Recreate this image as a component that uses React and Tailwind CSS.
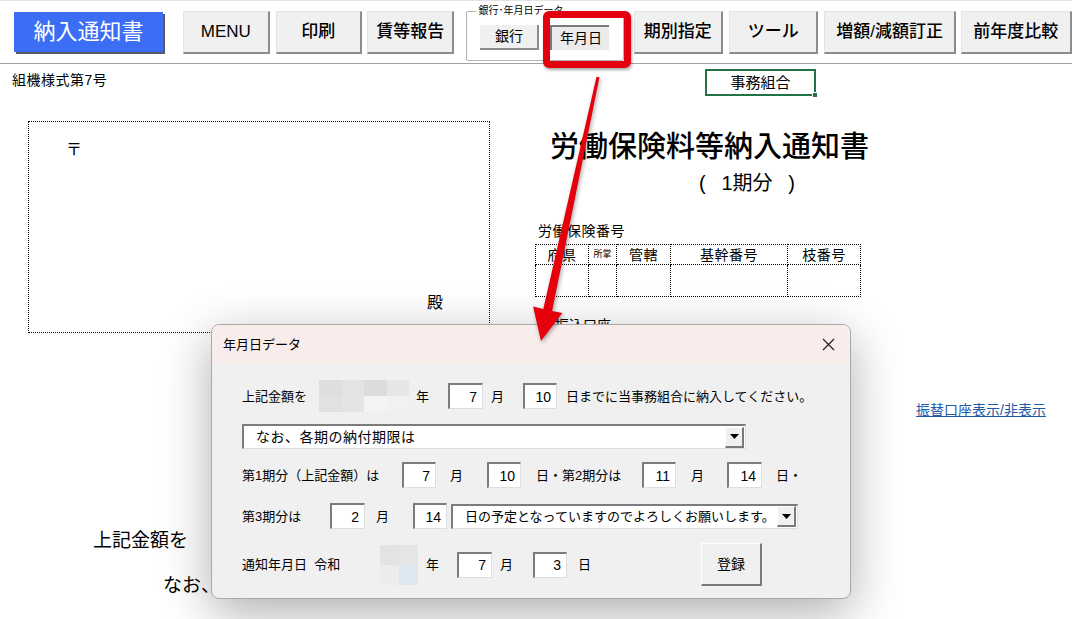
import React from "react";

const ToolButton = ({ label, className }) => (
  <div
    className={`h-[43px] flex items-center justify-center bg-[#f0f0f0] border-t border-l border-t-[#e4e4e4] border-l-[#e4e4e4] border-r-2 border-b-2 border-r-[#8c8c8c] border-b-[#8c8c8c] text-[17px] font-medium text-black ${className}`}
  >
    {label}
  </div>
);

const Field = ({ value, className }) => (
  <div
    className={`h-[26px] bg-white border-t-2 border-l-2 border-t-[#7c7c7c] border-l-[#7c7c7c] border-r border-b border-r-[#dedede] border-b-[#dedede] flex items-center justify-end pr-[5px] text-[14px] leading-none ${className}`}
  >
    {value}
  </div>
);

const DropButton = () => (
  <div className="shrink-0 w-[19px] h-[21px] bg-[#f0f0f0] border-t border-l border-white border-r-2 border-b-2 border-r-[#7a7a7a] border-b-[#7a7a7a] flex items-center justify-center">
    <svg width="9" height="5" viewBox="0 0 9 5">
      <path d="M0 0h9L4.5 5z" fill="#000" />
    </svg>
  </div>
);

const Combo = ({ text, className }) => (
  <div
    className={`h-[25px] bg-white border-t-2 border-l-2 border-t-[#7c7c7c] border-l-[#7c7c7c] border-r border-b border-r-[#dedede] border-b-[#dedede] flex items-center justify-between pl-[12px] pr-[1px] leading-none whitespace-nowrap ${className}`}
  >
    <span>{text}</span>
    <DropButton />
  </div>
);

const Dialog = () => (
  <div className="absolute left-[211px] top-[324px] w-[640px] h-[275px] rounded-[8px] border border-[#a9a9a9] bg-[#f0f0f0] shadow-[0_14px_50px_rgba(0,0,0,0.32)] overflow-hidden text-black">
    <div className="h-[38px] bg-[#f9edec] flex items-center justify-between pl-[11px] pr-[15px]">
      <span className="text-[13px] leading-none">年月日データ</span>
      <svg width="13" height="13" viewBox="0 0 13 13">
        <path d="M1 1l11 11M12 1L1 12" stroke="#222" strokeWidth="1.2" />
      </svg>
    </div>
    <div className="flex flex-col pl-[30px] pt-[16px] text-[13px] leading-none whitespace-nowrap">
      {/* row 1 */}
      <div className="flex items-center h-[34px]">
        <span className="w-[77px]">上記金額を</span>
        <div className="grid grid-cols-4 grid-rows-2 w-[90px] h-[32px]">
          <div className="bg-[#dedede]" />
          <div className="bg-[#e3e3e3]" />
          <div className="bg-[#dcdcdc]" />
          <div className="bg-[#e6e6e6]" />
          <div className="bg-[#e1e1e1]" />
          <div className="bg-[#e4e4e4]" />
          <div className="bg-[#f3f3f3]" />
          <div className="bg-[#f1f1f1]" />
        </div>
        <span className="w-[39px] pl-[7px]">年</span>
        <Field value="7" className="w-[35px]" />
        <span className="w-[40px] pl-[8px]">月</span>
        <Field value="10" className="w-[34px]" />
        <span className="pl-[9px]">日までに当事務組合に納入してください。</span>
      </div>
      {/* row 2 */}
      <div className="flex mt-[11px]">
        <Combo text="なお、各期の納付期限は" className="w-[504px] text-[14px] tracking-[0.5px]" />
      </div>
      {/* row 3 */}
      <div className="flex items-center mt-[13px] h-[26px]">
        <span className="w-[160px]">第1期分（上記金額）は</span>
        <Field value="7" className="w-[34px]" />
        <span className="w-[51px] pl-[14px]">月</span>
        <Field value="10" className="w-[34px]" />
        <span className="w-[121px] pl-[15px]">日・第2期分は</span>
        <Field value="11" className="w-[34px]" />
        <span className="w-[51px] pl-[15px]">月</span>
        <Field value="14" className="w-[35px]" />
        <span className="pl-[14px]">日・</span>
      </div>
      {/* row 4 */}
      <div className="flex items-center mt-[15px] h-[26px]">
        <span className="w-[88px]">第3期分は</span>
        <Field value="2" className="w-[35px]" />
        <span className="w-[48px] pl-[11px]">月</span>
        <Field value="14" className="w-[34px]" />
        <Combo
          text="日の予定となっていますのでよろしくお願いします。"
          className="w-[347px] ml-[4px] text-[13px]"
        />
      </div>
      {/* row 5 */}
      <div className="flex items-center mt-[14px] h-[43px]">
        <span className="w-[138px]">通知年月日&nbsp;&nbsp;令和</span>
        <div className="grid grid-cols-2 grid-rows-2 w-[38px] h-[40px]">
          <div className="bg-[#e3e3e3]" />
          <div className="bg-[#e4e5e6]" />
          <div className="bg-[#ececec]" />
          <div className="bg-[#dde7ef]" />
        </div>
        <span className="w-[39px] pl-[8px]">年</span>
        <Field value="7" className="w-[35px]" />
        <span className="w-[41px] pl-[8px]">月</span>
        <Field value="3" className="w-[34px]" />
        <span className="w-[134px] pl-[11px]">日</span>
        <div className="w-[61px] h-[43px] flex items-center justify-center bg-[#f0f0f0] border-t border-l border-white border-r-2 border-b-2 border-r-[#7a7a7a] border-b-[#7a7a7a] text-[14px]">
          登録
        </div>
      </div>
    </div>
  </div>
);

const Arrow = () => (
  <svg
    className="absolute inset-0 pointer-events-none"
    width="1072"
    height="619"
    viewBox="0 0 1072 619"
  >
    <polygon
      points="596.5,76.7 599.5,77.3 552.1,311 562.4,312.9 541,341 533.1,306.5 543.3,309"
      fill="#e5000c"
      className="drop-shadow-[1px_2px_2px_rgba(0,0,0,0.35)]"
    />
  </svg>
);

export default function App() {
  return (
    <div className="relative w-[1072px] h-[619px] overflow-hidden bg-white text-black font-['Liberation_Sans','Noto_Sans_CJK_JP',sans-serif]">
      {/* toolbar */}
      <div className="h-[64px] border-t border-t-[#e2e2e2] border-b border-b-[#a2a2a2] flex items-start pt-[10px]">
        <div className="ml-[14px] mt-[1px] w-[150px] h-[40px] bg-[#3c6ef5] shadow-[2px_2px_0_#545a68] flex items-center justify-center text-white text-[22px] leading-none">
          納入通知書
        </div>
        <ToolButton label="MENU" className="ml-[20px] w-[87px]" />
        <ToolButton label="印刷" className="ml-[6px] w-[87px]" />
        <ToolButton label="賃等報告" className="ml-[5px] w-[88px]" />
        <div className="relative ml-[12px] w-[158px] h-[50px] border border-[#b4b4b4] rounded-[2px] flex items-start pt-[13px] pl-[13px]">
          <span className="absolute left-[9px] top-[-6px] bg-white px-[2px] text-[10px] leading-none">
            銀行･年月日データ
          </span>
          <div className="w-[59px] h-[25px] bg-[#f0f0f0] border-r-2 border-b-2 border-r-[#8c8c8c] border-b-[#8c8c8c] flex items-center justify-center text-[14px]">
            銀行
          </div>
          <div className="ml-[11px] w-[59px] h-[25px] bg-[#ebebeb] border-t-2 border-l-2 border-t-[#7a7a7a] border-l-[#7a7a7a] flex items-center justify-center text-[14px]">
            年月日
          </div>
        </div>
        <ToolButton label="期別指定" className="ml-[10px] w-[90px]" />
        <ToolButton label="ツール" className="ml-[6px] w-[90px]" />
        <ToolButton label="増額/減額訂正" className="ml-[6px] w-[132px]" />
        <ToolButton label="前年度比較" className="ml-[5px] w-[112px]" />
      </div>

      {/* sheet */}
      <div className="flex">
        <div className="w-[535px] flex flex-col items-start">
          <p className="ml-[12px] mt-[8px] text-[14px] leading-[16px] tracking-[0.5px]">組機様式第7号</p>
          <div className="ml-[28px] mt-[33px] w-[462px] h-[212px] border border-dotted border-black flex flex-col">
            <span className="ml-[37px] mt-[19px] text-[16px] leading-[18px] self-start">〒</span>
            <div className="flex-1" />
            <span className="mr-[46px] mb-[20px] text-[16px] leading-[18px] self-end">殿</span>
          </div>
          <p className="ml-[93px] mt-[196px] text-[19px] leading-[24px]">上記金額を</p>
          <p className="ml-[163px] mt-[21px] text-[19px] leading-[24px]">なお、</p>
        </div>

        <div className="w-[365px] flex flex-col items-start">
          <div className="relative ml-[170px] mt-[5px] w-[111px] h-[27px] border-2 border-[#217346] flex items-center justify-center text-[15px] leading-none">
            事務組合
            <div className="absolute right-[-4px] bottom-[-4px] w-[6px] h-[6px] bg-[#217346] border border-white" />
          </div>
          <h1 className="ml-[15px] mt-[33px] text-[29px] leading-[36px] font-medium">
            労働保険料等納入通知書
          </h1>
          <div className="ml-[164px] mt-[5px] w-[96px] flex justify-between text-[20px] leading-[26px]">
            <span>(</span>
            <span>1期分</span>
            <span>)</span>
          </div>
          <p className="ml-[3px] mt-[27px] text-[14px] leading-[16px] tracking-[0.5px]">労働保険番号</p>
          <table className="mt-[5px] w-[325px] table-fixed border-collapse text-[14px] leading-none tracking-[0.5px]">
            <tbody>
              <tr className="h-[20px]">
                <td className="w-[53px] border border-dotted border-black text-center">府県</td>
                <td className="w-[28px] border border-dotted border-black text-center text-[9px] tracking-normal">所掌</td>
                <td className="w-[54px] border border-dotted border-black text-center">管轄</td>
                <td className="w-[117px] border border-dotted border-black text-center">基幹番号</td>
                <td className="w-[73px] border border-dotted border-black text-center">枝番号</td>
              </tr>
              <tr className="h-[32px]">
                <td className="border border-dotted border-black" />
                <td className="border border-dotted border-black" />
                <td className="border border-dotted border-black" />
                <td className="border border-dotted border-black" />
                <td className="border border-dotted border-black" />
              </tr>
            </tbody>
          </table>
          <p className="ml-[20px] mt-[20px] text-[14px] leading-[16px]">振込口座</p>
        </div>

        <div className="flex flex-col items-start">
          <a className="ml-[16px] mt-[338px] text-[14px] leading-[16px] text-[#1f5aa6] underline">
            振替口座表示/非表示
          </a>
        </div>
      </div>

      {/* highlight on 年月日 button */}
      <div className="absolute left-[543px] top-[11px] w-[88px] h-[57px] border-[7px] border-[#e3000f] rounded-[6px] shadow-[1px_2px_3px_rgba(0,0,0,0.35)]" />

      <Dialog />
      <Arrow />
    </div>
  );
}
